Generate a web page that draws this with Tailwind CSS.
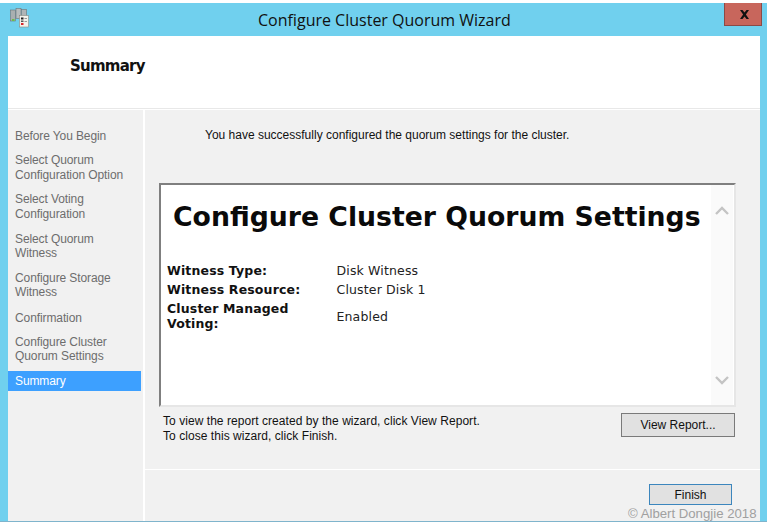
<!DOCTYPE html>
<html>
<head>
<meta charset="utf-8">
<script src="https://cdn.jsdelivr.net/npm/@tailwindcss/browser@4"></script>
</head>
<body class="bg-white">
<div class="relative w-[767px] h-[523px] overflow-hidden bg-white font-['Liberation_Sans',sans-serif] text-[12px]">
  <div class="mt-[3px] h-[519px] bg-[#70d0ee] border-b border-[#7fb4cc] flex flex-col">
    <!-- title bar -->
    <div class="h-[33px] flex items-center relative shrink-0">
      <svg class="ml-[10px] mt-[-3px]" width="19" height="20" viewBox="0 0 19 20">
        <rect x="0.5" y="2" width="5" height="11" fill="#a9afb0" stroke="#6d7578" stroke-width="0.6"/>
        <rect x="6" y="0.5" width="5" height="10" fill="#b8bdbe" stroke="#6d7578" stroke-width="0.6"/>
        <rect x="11.5" y="1.5" width="5" height="8" fill="#b0b5b6" stroke="#6d7578" stroke-width="0.6"/>
        <rect x="2" y="11" width="2.5" height="2" fill="#6cbf4b"/>
        <rect x="9.5" y="7.5" width="9" height="11.5" fill="#f4f2ec" stroke="#8a8a80" stroke-width="0.6"/>
        <rect x="11" y="9.5" width="2.5" height="2" fill="#222"/>
        <rect x="11" y="12.5" width="2.5" height="1.5" fill="#555"/>
        <rect x="11" y="15" width="2.5" height="2" fill="#d8262b"/>
        <rect x="14.5" y="10" width="2.5" height="1" fill="#999"/>
        <rect x="14.5" y="13" width="2.5" height="1" fill="#999"/>
      </svg>
      <div class="absolute left-[258px] top-[6px] text-[16px] leading-[22px] text-[#111] font-['Open_Sans',sans-serif] whitespace-nowrap">Configure Cluster Quorum Wizard</div>
      <div class="absolute left-[724px] top-0 w-[38px] h-[23px] bg-[#c8665c] border border-t-0 border-[#8c4a46] flex items-center justify-center">
        <svg class="ml-[3px]" width="11" height="9" viewBox="0 0 11 9"><path d="M1 0 H3.5 L5.5 2.6 L7.5 0 H10 L6.9 4.5 L10 9 H7.5 L5.5 6.4 L3.5 9 H1 L4.1 4.5 Z" fill="#111"/></svg>
      </div>
    </div>
    <!-- window client -->
    <div class="ml-[8px] w-[752px] flex-1 flex flex-col bg-white min-h-0">
      <div class="h-[72px] shrink-0 bg-white flex items-start pl-[62px] pt-[20px]">
        <span class="text-[15px] leading-[20px] text-[#111] font-['DejaVu_Sans',sans-serif] font-semibold tracking-[-0.75px]">Summary</span>
      </div>
      <div class="h-[1px] bg-[#e8e8e8] shrink-0"></div>
      <div class="h-[1px] bg-white shrink-0"></div>
      <div class="flex-1 flex min-h-0">
        <!-- nav -->
        <div class="w-[135px] shrink-0 bg-[#f1f1f1] pt-[19px] text-[#6d6d6d] leading-[14.5px] tracking-[-0.1px]">
          <div class="pl-[7px] mb-[9.5px]">Before You Begin</div>
          <div class="pl-[7px] mb-[10.3px]">Select Quorum<br>Configuration Option</div>
          <div class="pl-[7px] mb-[10.3px]">Select Voting<br>Configuration</div>
          <div class="pl-[7px] mb-[10.3px]">Select Quorum<br>Witness</div>
          <div class="pl-[7px] mb-[11.5px]">Configure Storage<br>Witness</div>
          <div class="pl-[7px] mb-[9px]">Confirmation</div>
          <div class="pl-[7px] mb-[7px]">Configure Cluster<br>Quorum Settings</div>
          <div class="pl-[7px] h-[20px] w-[133px] flex items-center bg-[#3da0ff] text-white">Summary</div>
        </div>
        <div class="w-[2px] bg-white shrink-0"></div>
        <!-- main -->
        <div class="flex-1 bg-[#f1f1f1] flex flex-col min-w-0">
          <div class="h-[359px] shrink-0 flex flex-col">
            <div class="pl-[60px] pt-[17px] h-[73px] shrink-0 text-[#111] leading-[16px]">You have successfully configured the quorum settings for the cluster.</div>
            <!-- report -->
            <div class="ml-[14px] w-[577px] h-[224px] shrink-0 border-t-2 border-l-2 border-[#7f7f7f] border-r-2 border-r-[#e6e6e6] border-b-2 border-b-[#e6e6e6] bg-white flex font-['DejaVu_Sans',sans-serif]">
              <div class="flex-1 min-w-0 pl-[6px]">
                <div class="pl-[6px] pt-[13px] h-[76px] text-[26.7px] leading-[38px] font-bold text-[#0a0a0a] whitespace-nowrap">Configure Cluster Quorum Settings</div>
                <div class="grid grid-cols-[169.5px_1fr] text-[12.5px] leading-[15px] text-[#222] tracking-[0.15px]">
                  <div class="font-bold h-[19px] pt-[2px] text-[#111]">Witness Type:</div><div class="h-[19px] pt-[2px]">Disk Witness</div>
                  <div class="font-bold h-[19px] pt-[2px] text-[#111]">Witness Resource:</div><div class="h-[19px] pt-[2px]">Cluster Disk 1</div>
                  <div class="font-bold pt-[2px] text-[#111]">Cluster Managed<br>Voting:</div><div class="flex items-center pt-[2px]">Enabled</div>
                </div>
              </div>
              <div class="w-[22px] shrink-0 bg-[#fafafa] flex flex-col justify-between items-center pt-[21px] pb-[20px] mr-[1px]">
                <svg width="14" height="9" viewBox="0 0 14 9"><path d="M1 8 L7 2 L13 8" fill="none" stroke="#c4c4c4" stroke-width="2.4"/></svg>
                <svg width="14" height="9" viewBox="0 0 14 9"><path d="M1 1 L7 7 L13 1" fill="none" stroke="#c4c4c4" stroke-width="2.4"/></svg>
              </div>
            </div>
            <!-- report hint -->
            <div class="flex justify-between ml-[18px] w-[572px] pt-[6px]">
              <div class="text-[#111] leading-[15px] pt-[1px] tracking-[0.05px]">To view the report created by the wizard, click View Report.<br>To close this wizard, click Finish.</div>
              <div class="w-[114px] h-[24px] bg-[#e1e1e1] border border-[#7a7a7a] flex items-center justify-center text-[#111]">View Report...</div>
            </div>
          </div>
          <div class="h-[1px] bg-white shrink-0"></div>
          <div class="flex-1 flex justify-end items-start pr-[28px] pt-[14px]">
            <div class="w-[83px] h-[21px] bg-[#e1e1e1] border border-[#3c86bd] flex items-center justify-center text-[#111]">Finish</div>
          </div>
        </div>
      </div>
    </div>
  </div>
  <div class="absolute left-[628px] top-[506px] text-[13.2px] leading-[15px] text-[#a0a0a0] whitespace-nowrap">© Albert Dongjie 2018</div>
</div>
</body>
</html>
